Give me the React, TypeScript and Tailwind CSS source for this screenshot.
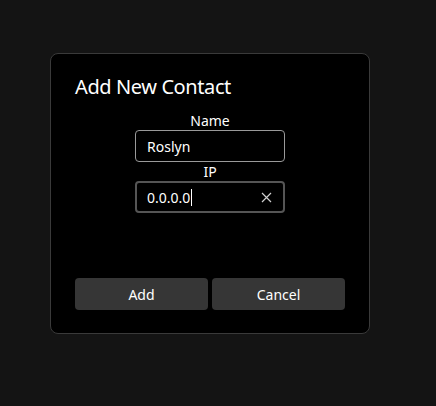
import React from "react";

export default function App() {
  return (
    <div
      className="w-[436px] h-[406px] bg-[#141414] relative overflow-hidden"
      style={{ fontFamily: '"Noto Sans", "Open Sans", sans-serif' }}
    >
      <div className="absolute left-[50px] top-[53px] w-[320px] h-[281px] bg-black border border-[#3a3a3a] rounded-[8px] px-[24px] pt-[19px] pb-[23px] flex flex-col">
        <div className="text-[20px] leading-[28px] tracking-[-0.4px] text-white">Add New Contact</div>
        <div className="flex flex-col items-center mt-[11px]">
          <div className="text-[14px] leading-[18px] text-white">Name</div>
          <div className="w-[150px] h-[32px] border border-[#9a9a9a] rounded-[4px] bg-black flex items-center px-[11px] text-[14px] text-white">
            Roslyn
          </div>
          <div className="text-[14px] leading-[19px] text-white">IP</div>
          <div className="w-[150px] h-[32px] border-2 border-[#555] rounded-[4px] bg-black flex items-center pl-[10px] pr-[10px] text-[14px] text-white">
            <span>0.0.0.0</span>
            <span className="w-px h-[17px] bg-white ml-px" />
            <span className="flex-1" />
            <svg width="11" height="11" viewBox="0 0 11 11" className="mr-[1px]">
              <path d="M1 1 L10 10 M10 1 L1 10" stroke="#d0d0d0" strokeWidth="1.2" />
            </svg>
          </div>
        </div>
        <div className="flex-1" />
        <div className="flex gap-[4px]">
          <button className="w-[133px] h-[32px] bg-[#363636] rounded-[4px] text-white text-[14px]">Add</button>
          <button className="w-[133px] h-[32px] bg-[#363636] rounded-[4px] text-white text-[14px]">Cancel</button>
        </div>
      </div>
    </div>
  );
}
